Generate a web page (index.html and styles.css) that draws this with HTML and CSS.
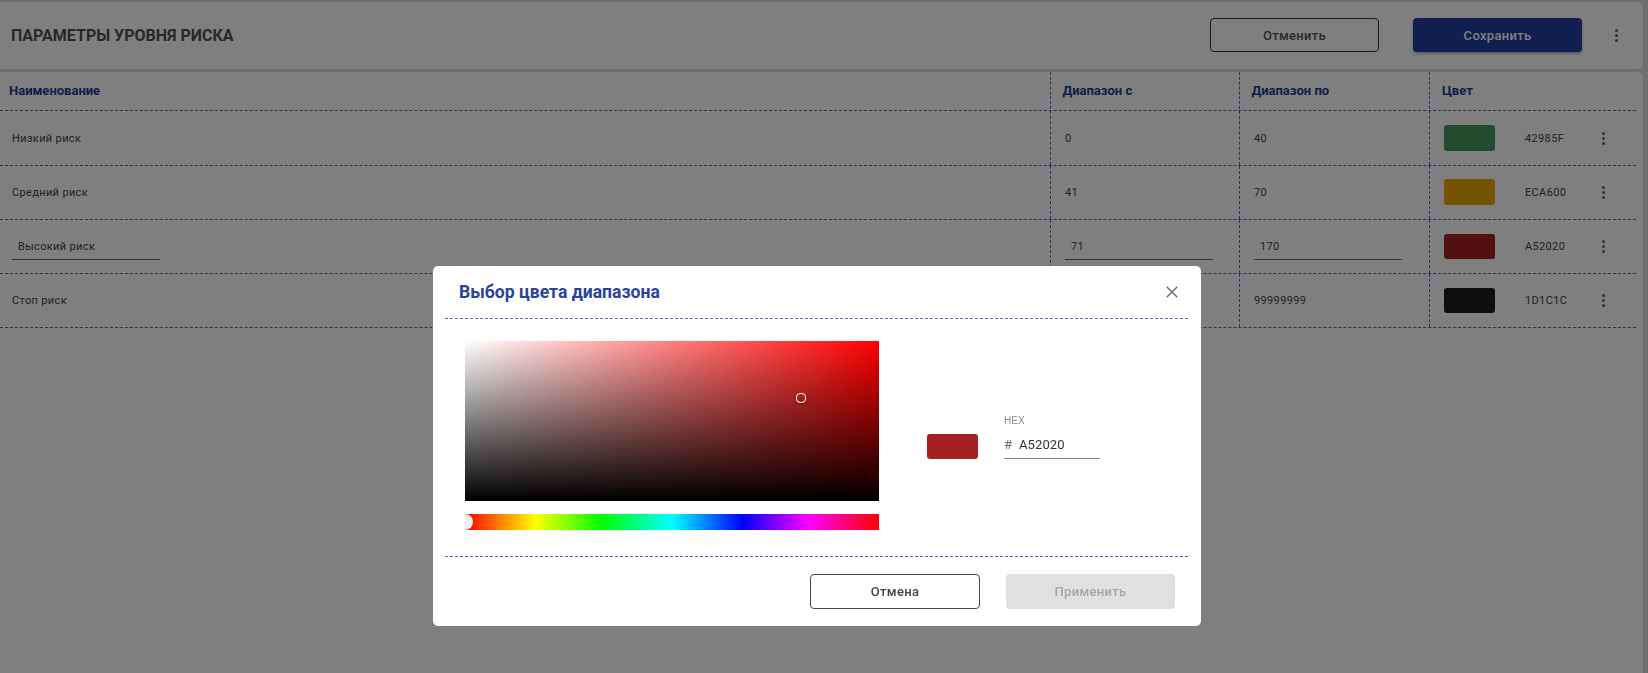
FILE: index.html
```html
<!DOCTYPE html>
<html lang="ru">
<head>
<meta charset="utf-8">
<title>Параметры уровня риска</title>
<link rel="stylesheet" href="styles.css">
</head>
<body>
<div class="page">
  <header class="topbar">
    <h1 class="page-title">ПАРАМЕТРЫ УРОВНЯ РИСКА</h1>
    <div class="actions">
      <button class="btn btn-outline">Отменить</button>
      <button class="btn btn-primary">Сохранить</button>
      <span class="kebab kebab-top"><i></i><i></i><i></i></span>
    </div>
  </header>
  <section class="table-card">
    <div class="row row-head">
      <div class="cell cell-name"><b>Наименование</b></div>
      <div class="cell cell-num"><b>Диапазон с</b></div>
      <div class="cell cell-num"><b>Диапазон по</b></div>
      <div class="cell cell-color"><b>Цвет</b></div>
    </div>
    <div class="row row-first">
      <div class="cell cell-name">Низкий риск</div>
      <div class="cell cell-num">0</div>
      <div class="cell cell-num">40</div>
      <div class="cell cell-color"><span class="chip chip-green"></span><span class="hex">42985F</span><span class="kebab"><i></i><i></i><i></i></span></div>
    </div>
    <div class="row">
      <div class="cell cell-name">Средний риск</div>
      <div class="cell cell-num">41</div>
      <div class="cell cell-num">70</div>
      <div class="cell cell-color"><span class="chip chip-amber"></span><span class="hex">ECA600</span><span class="kebab"><i></i><i></i><i></i></span></div>
    </div>
    <div class="row">
      <div class="cell cell-name"><span class="field field-name">Высокий риск</span></div>
      <div class="cell cell-num"><span class="field">71</span></div>
      <div class="cell cell-num"><span class="field">170</span></div>
      <div class="cell cell-color"><span class="chip chip-red"></span><span class="hex">A52020</span><span class="kebab"><i></i><i></i><i></i></span></div>
    </div>
    <div class="row">
      <div class="cell cell-name">Стоп риск</div>
      <div class="cell cell-num">100</div>
      <div class="cell cell-num">99999999</div>
      <div class="cell cell-color"><span class="chip chip-black"></span><span class="hex">1D1C1C</span><span class="kebab"><i></i><i></i><i></i></span></div>
    </div>
  </section>
</div>
<div class="backdrop">
  <div class="dialog">
    <div class="dialog-head">
      <h2 class="dialog-title">Выбор цвета диапазона</h2>
      <svg class="close" viewBox="0 0 12 12" width="12" height="12"><path d="M.7.7l10.6 10.6M11.3.7L.7 11.3" fill="none" stroke="#6b6b6b" stroke-width="1.4"/></svg>
    </div>
    <div class="dialog-body">
      <div class="picker">
        <div class="sat"><span class="sat-cursor"></span></div>
        <div class="hue"><span class="hue-thumb"></span></div>
      </div>
      <span class="preview"></span>
      <div class="hex-field">
        <span class="hex-label">HEX</span>
        <div class="hex-input"><span class="hash">#</span><span class="hex-value">A52020</span></div>
      </div>
    </div>
    <div class="dialog-foot">
      <button class="btn btn-dialog btn-outline-dark">Отмена</button>
      <button class="btn btn-dialog btn-disabled">Применить</button>
    </div>
  </div>
</div>
</body>
</html>
```
FILE: styles.css
```css
* { box-sizing: border-box; }
html, body { height: 100%; }
body {
  margin: 0;
  background: #dedede;
  font-family: Roboto, "Liberation Sans", sans-serif;
  color: #3c3c3c;
  overflow: hidden;
}
.page {
  padding: 2px 5px 0 0;
  display: flex;
  flex-direction: column;
  gap: 3px;
  height: 100%;
}
.topbar {
  height: 67px;
  background: #fff;
  border-radius: 0 5px 5px 0;
  display: flex;
  align-items: center;
  justify-content: space-between;
  padding: 0 0 1px 11px;
}
.page-title {
  margin: 0;
  font-size: 16px;
  font-weight: 700;
  color: #505050;
}
.actions {
  display: flex;
  align-items: center;
  gap: 34px;
}
.btn {
  font-family: inherit;
  font-size: 13px;
  font-weight: 500;
  letter-spacing: .3px;
  border-radius: 4px;
  width: 169px;
  height: 34px;
  padding: 0;
}
.btn-outline {
  background: #fff;
  border: 1px solid #333;
  color: #555;
}
.btn-primary {
  background: #223fa0;
  border: 0;
  color: #fff;
  box-shadow: 0 2px 3px rgba(0,0,0,.3);
}
.kebab {
  display: flex;
  flex-direction: column;
  align-items: center;
  gap: 2px;
  width: 4px;
}
.kebab i {
  width: 3px;
  height: 3px;
  border-radius: 50%;
  background: #666;
}
.kebab-top { margin: 0 25px 0 -2px; }
.table-card {
  flex: 1;
  background: #fff;
  border-radius: 0 5px 0 0;
}
.row {
  display: grid;
  grid-template-columns: 1050px 189px 190px 207px;
  height: 54px;
  width: 1636px;
  border-bottom: 1px dashed #5565a8;
  font-size: 11px;
  letter-spacing: .35px;
  color: #4a3f3f;
}
.row-first { height: 55px; }
.row-head {
  height: 39px;
  padding-bottom: 1px;
  font-size: 13px;
  letter-spacing: 0;
  color: #223a94;
}
.row-head b { font-weight: 700; }
.cell {
  display: flex;
  align-items: center;
  padding-left: 14px;
}
.cell-name { padding-left: 12px; }
.row-head .cell-name { padding-left: 9px; }
.row-head .cell-num { padding-left: 11.5px; }
.cell-num, .cell-color { border-left: 1px dashed #5565a8; }
.field {
  display: block;
  width: 148px;
  height: 26px;
  line-height: 26px;
  padding: 0 0 0 6px;
  border-bottom: 1px solid #666;
}
.cell-color { padding-left: 14px; }
.row-head .cell-color { padding-left: 12px; }
.chip {
  width: 51px;
  height: 25px;
  border-radius: 3px;
  flex: none;
}
.chip-green { background: #42985f; height: 26px; }
.chip-amber { background: #eca600; height: 26px; margin-top: -1px; }
.chip-red { background: #a52020; }
.chip-black { background: #1d1c1c; }
.hex { margin-left: 30px; width: 76px; }
.backdrop {
  position: fixed;
  inset: 0;
  background: rgba(0,0,0,.5);
  display: flex;
  align-items: flex-start;
  justify-content: flex-start;
  padding: 266px 0 0 433px;
}
.dialog {
  width: 768px;
  height: 360px;
  background: #fff;
  border-radius: 5px;
  display: flex;
  flex-direction: column;
  padding: 0 13px 0 12px;
}
.dialog-head {
  height: 53px;
  flex: none;
  border-bottom: 1px dashed #5565a8;
  display: flex;
  align-items: center;
  justify-content: space-between;
  padding: 0 10px 0 14px;
}
.dialog-title {
  margin: 0;
  font-size: 17.6px;
  font-weight: 700;
  color: #2a429c;
}
.dialog-body {
  height: 238px;
  flex: none;
  border-bottom: 1px dashed #5565a8;
  display: flex;
  align-items: flex-start;
  padding: 22px 0 0 20px;
}
.picker {
  width: 414px;
  flex: none;
  display: flex;
  flex-direction: column;
  gap: 13px;
}
.sat {
  position: relative;
  height: 160px;
  background: linear-gradient(to top, #000, transparent), linear-gradient(to right, #fff, #f00);
}
.sat-cursor {
  position: absolute;
  left: 331px;
  top: 52px;
  width: 10px;
  height: 10px;
  border: 1px solid #fff;
  border-radius: 4px;
  box-shadow: 0 1px 2px rgba(0,0,0,.4);
}
.hue {
  position: relative;
  height: 16px;
  overflow: hidden;
  background: linear-gradient(to right, #f00 0%, #ff0 17%, #0f0 33%, #0ff 50%, #00f 67%, #f0f 83%, #f00 100%);
}
.hue-thumb {
  position: absolute;
  left: -8px;
  top: 0;
  width: 16px;
  height: 16px;
  border-radius: 50%;
  background: #eee;
}
.preview {
  width: 51px;
  height: 25px;
  margin: 93px 0 0 48px;
  border-radius: 3px;
  background: #a52020;
}
.hex-field {
  margin: 74px 0 0 26px;
  width: 96px;
  display: flex;
  flex-direction: column;
}
.hex-label {
  font-family: "Liberation Sans", sans-serif;
  font-size: 10px;
  color: #8a8a8a;
  line-height: 12px;
}
.hex-input {
  display: flex;
  align-items: center;
  height: 32px;
  padding-top: 3px;
  border-bottom: 1px solid #8a8a8a;
  font-size: 13px;
  letter-spacing: .1px;
  color: #333;
}
.hash { width: 15px; color: #666; }
.dialog-foot {
  flex: 1;
  display: flex;
  align-items: flex-start;
  justify-content: flex-end;
  gap: 26px;
  padding: 17px 13px 0 0;
}
.btn-dialog { width: 170px; height: 35px; font-size: 13px; }
.btn-outline-dark { background: #fff; border: 1px solid #444; color: #444; }
.btn-disabled { width: 169px; background: #e0e0e0; border: 0; color: #a6a6a6; }
```
